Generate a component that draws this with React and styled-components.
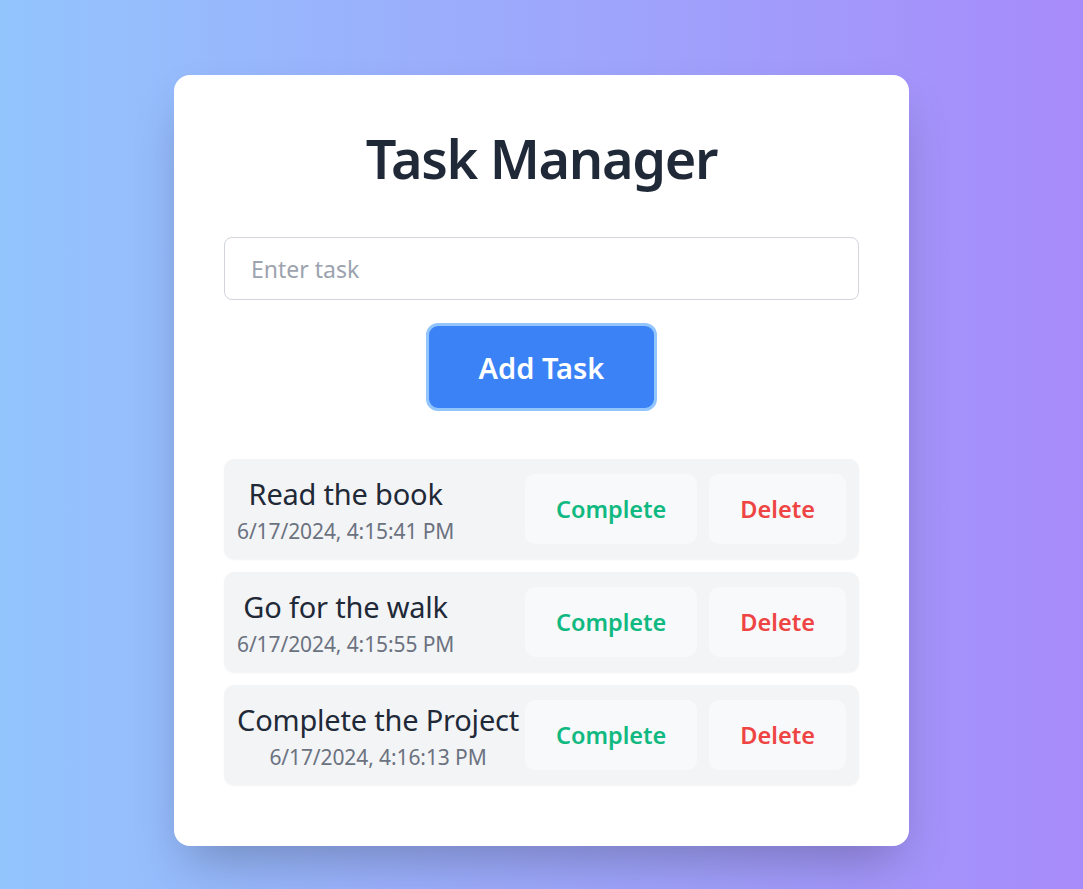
import React, { useState } from "react"
import styled, { createGlobalStyle } from "styled-components"

const GlobalStyle = createGlobalStyle`
  html, body {
    margin: 0;
    padding: 0;
  }
  body {
    font-family: "Noto Sans", "Open Sans", sans-serif;
  }
  * {
    box-sizing: border-box;
  }
`

//page background with the gradient
const Page = styled.div`
  min-height: 100vh;
  background: linear-gradient(to right, #93c5fd, #a78bfa);
  display: flex;
  justify-content: center;
  align-items: flex-start;
  padding-top: 75px;
`

const Card = styled.div`
  width: 735px;
  background: #fff;
  border-radius: 16px;
  padding: 47px 50px 61px;
  box-shadow: 0 25px 50px -12px rgba(0, 0, 0, 0.25);
  display: flex;
  flex-direction: column;
  align-items: center;
`

const Title = styled.h1`
  margin: 0;
  font-size: 54px;
  line-height: 72px;
  font-weight: 600;
  color: #1f2937;
  letter-spacing: -1.3px;
`

const TaskInput = styled.input`
  margin-top: 43px;
  width: 100%;
  height: 63px;
  border: 1px solid #d1d5db;
  border-radius: 8px;
  padding: 0 26px;
  font-family: inherit;
  font-size: 23px;
  color: #1f2937;
  outline: none;
  &::placeholder {
    color: #9ca3af;
  }
`

const AddButton = styled.button`
  margin-top: 23px;
  height: 88px;
  padding: 0 50px;
  border: 3px solid #93c5fd;
  border-radius: 12px;
  background: #3b82f6;
  color: #fff;
  font-family: inherit;
  font-size: 29px;
  font-weight: 600;
  cursor: pointer;
`

const List = styled.div`
  margin-top: 48px;
  width: 100%;
  display: flex;
  flex-direction: column;
  gap: 13px;
`

const Row = styled.div`
  height: 100px;
  padding: 0 13px;
  background: #f3f4f6;
  border-radius: 10px;
  box-shadow: 0 1px 2px rgba(0, 0, 0, 0.05);
  display: flex;
  justify-content: space-between;
  align-items: center;
`

const TaskText = styled.div`
  text-align: center;
  white-space: nowrap;
  display: flex;
  flex-direction: column;
  align-items: center;
`

const TaskName = styled.span`
  font-size: 29px;
  line-height: 44px;
  color: #1f2937;
  letter-spacing: -0.2px;
  text-decoration: ${(props) => (props.done ? "line-through" : "none")};
`

const TaskDate = styled.span`
  font-size: 21px;
  line-height: 30px;
  color: #6b7280;
  letter-spacing: -0.1px;
`

const Actions = styled.div`
  display: flex;
  flex-shrink: 0;
  gap: 12px;
`

const ActionButton = styled.button`
  height: 70px;
  padding: 0 31px;
  border: none;
  border-radius: 10px;
  background: #f8f9fa;
  color: ${(props) => props.color};
  font-family: inherit;
  font-size: 23.5px;
  font-weight: 600;
  cursor: pointer;
`

const initialTasks = [
  { id: 1, text: "Read the book", date: "6/17/2024, 4:15:41 PM" },
  { id: 2, text: "Go for the walk", date: "6/17/2024, 4:15:55 PM" },
  { id: 3, text: "Complete the Project", date: "6/17/2024, 4:16:13 PM" },
]

export default function App() {
  const [tasks, setTasks] = useState(initialTasks)
  const [value, setValue] = useState("")

  const addTask = () => {
    if (!value.trim()) return
    setTasks((prev) => [
      ...prev,
      { id: Date.now(), text: value, date: new Date().toLocaleString("en-US") },
    ])
    setValue("")
  }

  const toggle = (id) =>
    setTasks((prev) => prev.map((t) => (t.id === id ? { ...t, done: !t.done } : t)))

  const remove = (id) => setTasks((prev) => prev.filter((t) => t.id !== id))

  return (
    <>
      <GlobalStyle />
      <Page>
        <Card>
          <Title>Task Manager</Title>
          <TaskInput
            placeholder="Enter task"
            value={value}
            onChange={(e) => setValue(e.target.value)}
          />
          <AddButton onClick={addTask}>Add Task</AddButton>
          <List>
            {tasks.map((task) => (
              <Row key={task.id}>
                <TaskText>
                  <TaskName done={task.done}>{task.text}</TaskName>
                  <TaskDate>{task.date}</TaskDate>
                </TaskText>
                <Actions>
                  <ActionButton color="#10b981" onClick={() => toggle(task.id)}>
                    Complete
                  </ActionButton>
                  <ActionButton color="#ef4444" onClick={() => remove(task.id)}>
                    Delete
                  </ActionButton>
                </Actions>
              </Row>
            ))}
          </List>
        </Card>
      </Page>
    </>
  )
}
